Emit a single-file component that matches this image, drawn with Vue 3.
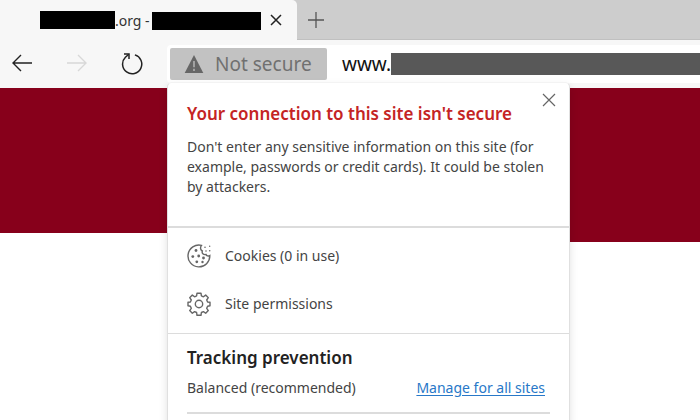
<script setup>
import { ref } from 'vue'

const popupOpen = ref(true)
</script>

<template>
  <div class="browser">
    <header class="tab-strip">
      <div class="tab">
        <span class="tab-title"><span class="redacted site"></span>.org -<span class="redacted name"></span></span>
        <button class="icon-button tab-close" aria-label="Close tab">
          <svg width="12" height="12" viewBox="0 0 12 12" fill="none" stroke="#222" stroke-width="1.5"><path d="M1 1l10 10M11 1L1 11" /></svg>
        </button>
      </div>
      <button class="icon-button new-tab" aria-label="New tab">
        <svg width="18" height="18" viewBox="0 0 18 18" fill="none" stroke="#555" stroke-width="1.3"><path d="M9 1v16M1 9h16" /></svg>
      </button>
    </header>

    <nav class="toolbar">
      <div class="nav-buttons">
        <button class="icon-button" aria-label="Back">
          <svg width="22" height="20" viewBox="0 0 22 20" fill="none" stroke="#222" stroke-width="1.4"><path d="M21 9H2M10 1L2 9l8 8" /></svg>
        </button>
        <button class="icon-button" aria-label="Forward" disabled>
          <svg width="22" height="20" viewBox="0 0 22 20" fill="none" stroke="#d8d8d8" stroke-width="1.4"><path d="M1 9h19M12 1l8 8-8 8" /></svg>
        </button>
        <button class="icon-button" aria-label="Refresh">
          <svg width="22" height="22" viewBox="0 0 22 22" fill="none" stroke="#222" stroke-width="1.5"><path d="M13.9 1.9A9.6 9.6 0 1 1 4.4 4.3L7.8 1.3" /><path d="M3 1H8V6" /></svg>
        </button>
      </div>
      <div class="address-bar">
        <button class="security" :aria-expanded="popupOpen" @click="popupOpen = !popupOpen">
          <svg width="20" height="20" viewBox="0 0 20 20"><path d="M10 1L19.3 19H.7z" fill="#666" /><path d="M10 7v6.2M10 14.8V17" stroke="#c2c2c2" stroke-width="1.3" /></svg>
          Not secure
        </button>
        <span class="url">www.</span>
        <span class="url-cover"></span>

        <section v-if="popupOpen" class="popup" aria-labelledby="security-heading">
          <button class="icon-button popup-close" aria-label="Close" @click="popupOpen = false">
            <svg width="14" height="14" viewBox="0 0 14 14" fill="none" stroke="#666" stroke-width="1.2"><path d="M1 1l12 12M13 1L1 13" /></svg>
          </button>
          <div class="summary">
            <h1 id="security-heading">Your connection to this site isn't secure</h1>
            <p>Don't enter any sensitive information on this site (for example, passwords or credit cards). It could be stolen by attackers.</p>
          </div>
          <div class="options">
            <button class="option">
              <svg width="24" height="24" viewBox="0 0 24 24" fill="none" stroke="#666" stroke-width="1.4">
                <path d="M14.5 1.4A10.9 10.9 0 1 0 22.8 11.5c-1.5.9-3.4.4-3.8-1-2.8.5-4.4-1.2-3.7-3.5-2-.8-2.3-3.6-.8-5.6z" />
                <g fill="#666" stroke="none">
                  <circle cx="9" cy="6.5" r="1.4" /><circle cx="5.8" cy="12.6" r="1.4" /><circle cx="11.7" cy="12" r="1.4" />
                  <circle cx="16.5" cy="14" r="1.4" /><circle cx="9.8" cy="17.8" r="1.4" /><circle cx="15.5" cy="18" r="1.2" />
                  <circle cx="18" cy="3.2" r=".8" /><circle cx="22.7" cy="2.2" r=".7" /><circle cx="19" cy="7" r=".8" /><circle cx="22.7" cy="6.8" r=".8" />
                </g>
              </svg>
              Cookies (0 in use)
            </button>
            <button class="option">
              <svg width="24" height="24" viewBox="0 0 24 24" fill="none" stroke="#666" stroke-width="1.4" stroke-linejoin="round">
                <path d="M10 1.2h4l.4 2.7 2 .9 2.3-1.7 2.6 2.6-1.6 2.3.9 2 2.4.3v3.5l-2.4.5-.9 2 1.6 2.3-2.6 2.6-2.3-1.6-2 .9-.4 2.8h-4l-.4-2.8-2-.9-2.3 1.6-2.6-2.6 1.6-2.3-.9-2-2.4-.5v-3.5l2.4-.3.9-2-1.6-2.3 2.6-2.6 2.3 1.7 2-.9z" />
                <circle cx="12" cy="12" r="3.7" />
              </svg>
              Site permissions
            </button>
          </div>
          <div class="tracking">
            <h2>Tracking prevention</h2>
            <div class="tracking-row">
              <span>Balanced (recommended)</span>
              <a href="#">Manage for all sites</a>
            </div>
          </div>
        </section>
      </div>
    </nav>

    <main class="page">
      <div class="banner"></div>
      <div class="banner tall"></div>
    </main>
  </div>
</template>

<style>
body {
  margin: 0;
  background: #fff;
}
</style>

<style scoped>
.browser {
  min-height: 100vh;
  max-height: 100vh;
  overflow: hidden;
  font-family: "Segoe UI", "Noto Sans", "Open Sans", sans-serif;
  font-size: 14px;
  color: #444;
  background: #fff;
}
button {
  margin: 0;
  padding: 0;
  border: 0;
  background: none;
  font: inherit;
  color: inherit;
}
svg {
  display: block;
  flex: none;
}
.icon-button {
  display: flex;
  align-items: center;
  justify-content: center;
}
.tab-strip {
  display: flex;
  height: 40px;
  background: #cdcdcd;
  box-shadow: inset 0 -1px #c0c0c0;
}
.tab {
  display: flex;
  align-items: center;
  justify-content: space-between;
  box-sizing: border-box;
  width: 297px;
  padding: 0 15px 0 40px;
  border-radius: 0 5px 0 0;
  background: #f7f7f7;
}
.tab-title {
  display: flex;
  align-items: center;
  height: 20px;
  color: #333;
}
.redacted {
  height: 18px;
  background: #000;
}
.site {
  width: 75px;
}
.name {
  align-self: flex-end;
  width: 109px;
  margin-left: 2px;
}
.new-tab {
  width: 38px;
}
.toolbar {
  display: flex;
  box-sizing: border-box;
  height: 48px;
  padding-top: 5px;
  background: #f7f7f7;
}
.nav-buttons {
  display: flex;
  gap: 33px;
  box-sizing: border-box;
  width: 167px;
  height: 38px;
  padding-left: 11px;
}
.address-bar {
  position: relative;
  display: flex;
  flex: 1;
  align-items: center;
  box-sizing: border-box;
  height: 38px;
  padding-left: 3px;
  border-radius: 4px 0 0 4px;
  background: #fff;
}
.security {
  display: flex;
  align-items: center;
  gap: 11px;
  box-sizing: border-box;
  width: 157px;
  height: 32px;
  padding-left: 14px;
  border-radius: 2px;
  background: #c2c2c2;
  color: #707070;
  font-size: 19px;
  white-space: nowrap;
}
.url {
  margin-left: 15px;
  color: #111;
  font-size: 19px;
}
.url-cover {
  flex: 1;
  height: 22px;
  background: #585858;
}
.popup {
  position: absolute;
  top: 37px;
  left: 0;
  box-sizing: border-box;
  width: 403px;
  padding-bottom: 24px;
  border: 1px solid #e0e0e0;
  border-top-color: #f3f3f3;
  border-radius: 5px;
  background: #fff;
  box-shadow: 0 4px 8px rgba(0, 0, 0, 0.12);
}
.popup-close {
  position: absolute;
  top: 10px;
  right: 13px;
}
.summary {
  box-sizing: border-box;
  min-height: 145px;
  padding: 19px 18px 28px 19px;
  border-bottom: 2px solid #dcdcdc;
}
h1,
h2,
p {
  margin: 0;
}
h1,
h2 {
  font-size: 17px;
  font-weight: 600;
  line-height: 24px;
}
h1 {
  color: #c42424;
}
h2 {
  color: #222;
}
p {
  margin-top: 11px;
  line-height: 20px;
}
.options {
  display: grid;
  gap: 24px;
  padding: 16px 19px 17px;
  border-bottom: 1px solid #dcdcdc;
}
.option {
  display: flex;
  align-items: center;
  gap: 14px;
  height: 24px;
  line-height: 20px;
}
.tracking {
  padding: 12px 19px 0;
}
.tracking-row {
  display: flex;
  justify-content: space-between;
  padding: 8px 5px 14px 0;
  border-bottom: 2px solid #dcdcdc;
  line-height: 20px;
}
a {
  color: #2878c8;
  text-underline-offset: 2px;
}
.page {
  display: grid;
  grid-template-columns: 368px 1fr;
  align-items: start;
}
.banner {
  height: 145px;
  background: #87001b;
}
.tall {
  height: 154px;
}
</style>
